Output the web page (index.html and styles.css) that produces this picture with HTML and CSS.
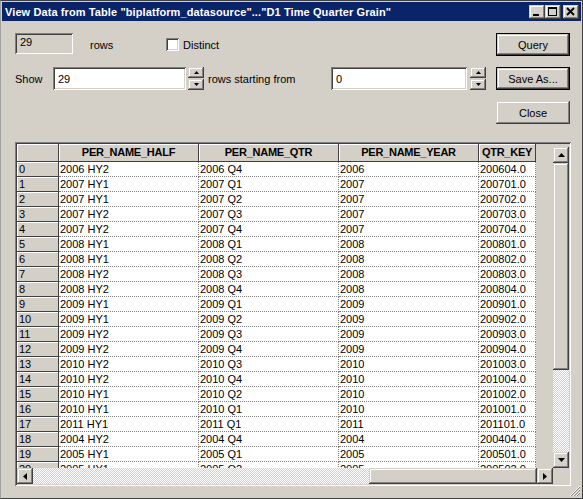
FILE: index.html
```html
<!DOCTYPE html>
<html>
<head>
<meta charset="utf-8">
<link rel="stylesheet" href="styles.css">
</head>
<body>
<div class="window">
  <div class="titlebar">
    <span class="title">View Data from Table "biplatform_datasource"..."D1 Time Quarter Grain"</span>
    <div class="tbtns">
      <span class="tbtn raised"><svg width="16" height="14" viewBox="0 0 16 14"><rect x="4" y="9" width="6" height="2" fill="#000"/></svg></span>
      <span class="tbtn raised"><svg width="16" height="14" viewBox="0 0 16 14" shape-rendering="crispEdges"><rect x="3.5" y="2.5" width="8" height="8" fill="none" stroke="#000"/><rect x="3" y="2" width="9" height="2" fill="#000"/></svg></span>
      <span class="tbtn raised close"><svg width="16" height="14" viewBox="0 0 16 14"><path d="M4 3 L11 10 M11 3 L4 10" stroke="#000" stroke-width="1.8" fill="none"/></svg></span>
    </div>
  </div>
  <div class="body">
    <div class="top">
      <div class="controls">
        <div class="row1">
          <div class="field ro sunken">29</div>
          <span class="lbl rows-lbl">rows</span>
          <span class="check sunken"></span>
          <span class="lbl">Distinct</span>
        </div>
        <div class="row2">
          <span class="lbl show">Show</span>
          <div class="field f1 sunken">29</div>
          <div class="spin s1">
            <span class="sbtn raised"><svg width="5" height="3" viewBox="0 0 5 3"><polygon points="0,3 5,3 2.5,0" fill="#000"/></svg></span>
            <span class="sbtn raised"><svg width="5" height="3" viewBox="0 0 5 3"><polygon points="0,0 5,0 2.5,3" fill="#000"/></svg></span>
          </div>
          <span class="lbl rsf">rows starting from</span>
          <div class="field f2 sunken">0</div>
          <div class="spin s2">
            <span class="sbtn raised"><svg width="5" height="3" viewBox="0 0 5 3"><polygon points="0,3 5,3 2.5,0" fill="#000"/></svg></span>
            <span class="sbtn raised"><svg width="5" height="3" viewBox="0 0 5 3"><polygon points="0,0 5,0 2.5,3" fill="#000"/></svg></span>
          </div>
        </div>
      </div>
      <div class="buttons">
        <div class="btn default"><span class="raised inner">Query</span></div>
        <div class="btn default"><span class="raised inner">Save As...</span></div>
        <div class="btn"><span class="raised inner">Close</span></div>
      </div>
    </div>

    <div class="frame">
      <div class="viewport">
        <div class="trow head">
          <span class="hc"></span><span class="hc">PER_NAME_HALF</span><span class="hc">PER_NAME_QTR</span><span class="hc">PER_NAME_YEAR</span><span class="hc">QTR_KEY</span>
        </div>
        <div class="trow"><span class="ix">0</span><span class="dc">2006 HY2</span><span class="dc">2006 Q4</span><span class="dc">2006</span><span class="dc">200604.0</span></div>
        <div class="trow"><span class="ix">1</span><span class="dc">2007 HY1</span><span class="dc">2007 Q1</span><span class="dc">2007</span><span class="dc">200701.0</span></div>
        <div class="trow"><span class="ix">2</span><span class="dc">2007 HY1</span><span class="dc">2007 Q2</span><span class="dc">2007</span><span class="dc">200702.0</span></div>
        <div class="trow"><span class="ix">3</span><span class="dc">2007 HY2</span><span class="dc">2007 Q3</span><span class="dc">2007</span><span class="dc">200703.0</span></div>
        <div class="trow"><span class="ix">4</span><span class="dc">2007 HY2</span><span class="dc">2007 Q4</span><span class="dc">2007</span><span class="dc">200704.0</span></div>
        <div class="trow"><span class="ix">5</span><span class="dc">2008 HY1</span><span class="dc">2008 Q1</span><span class="dc">2008</span><span class="dc">200801.0</span></div>
        <div class="trow"><span class="ix">6</span><span class="dc">2008 HY1</span><span class="dc">2008 Q2</span><span class="dc">2008</span><span class="dc">200802.0</span></div>
        <div class="trow"><span class="ix">7</span><span class="dc">2008 HY2</span><span class="dc">2008 Q3</span><span class="dc">2008</span><span class="dc">200803.0</span></div>
        <div class="trow"><span class="ix">8</span><span class="dc">2008 HY2</span><span class="dc">2008 Q4</span><span class="dc">2008</span><span class="dc">200804.0</span></div>
        <div class="trow"><span class="ix">9</span><span class="dc">2009 HY1</span><span class="dc">2009 Q1</span><span class="dc">2009</span><span class="dc">200901.0</span></div>
        <div class="trow"><span class="ix">10</span><span class="dc">2009 HY1</span><span class="dc">2009 Q2</span><span class="dc">2009</span><span class="dc">200902.0</span></div>
        <div class="trow"><span class="ix">11</span><span class="dc">2009 HY2</span><span class="dc">2009 Q3</span><span class="dc">2009</span><span class="dc">200903.0</span></div>
        <div class="trow"><span class="ix">12</span><span class="dc">2009 HY2</span><span class="dc">2009 Q4</span><span class="dc">2009</span><span class="dc">200904.0</span></div>
        <div class="trow"><span class="ix">13</span><span class="dc">2010 HY2</span><span class="dc">2010 Q3</span><span class="dc">2010</span><span class="dc">201003.0</span></div>
        <div class="trow"><span class="ix">14</span><span class="dc">2010 HY2</span><span class="dc">2010 Q4</span><span class="dc">2010</span><span class="dc">201004.0</span></div>
        <div class="trow"><span class="ix">15</span><span class="dc">2010 HY1</span><span class="dc">2010 Q2</span><span class="dc">2010</span><span class="dc">201002.0</span></div>
        <div class="trow"><span class="ix">16</span><span class="dc">2010 HY1</span><span class="dc">2010 Q1</span><span class="dc">2010</span><span class="dc">201001.0</span></div>
        <div class="trow"><span class="ix">17</span><span class="dc">2011 HY1</span><span class="dc">2011 Q1</span><span class="dc">2011</span><span class="dc">201101.0</span></div>
        <div class="trow"><span class="ix">18</span><span class="dc">2004 HY2</span><span class="dc">2004 Q4</span><span class="dc">2004</span><span class="dc">200404.0</span></div>
        <div class="trow"><span class="ix">19</span><span class="dc">2005 HY1</span><span class="dc">2005 Q1</span><span class="dc">2005</span><span class="dc">200501.0</span></div>
        <div class="trow"><span class="ix">20</span><span class="dc">2005 HY1</span><span class="dc">2005 Q2</span><span class="dc">2005</span><span class="dc">200502.0</span></div>
      </div>
      <div class="vscroll">
        <span class="sb raised"><svg width="7" height="4" viewBox="0 0 7 4"><polygon points="0,4 7,4 3.5,0" fill="#000"/></svg></span>
        <span class="vthumb raised"></span>
        <span class="vtrack dither"></span>
        <span class="sb raised"><svg width="7" height="4" viewBox="0 0 7 4"><polygon points="0,0 7,0 3.5,4" fill="#000"/></svg></span>
      </div>
      <div class="hscroll">
        <span class="sb raised"><svg width="4" height="7" viewBox="0 0 4 7"><polygon points="4,0 4,7 0,3.5" fill="#000"/></svg></span>
        <span class="htrack dither"></span>
        <span class="hthumb raised"></span>
        <span class="sb raised"><svg width="4" height="7" viewBox="0 0 4 7"><polygon points="0,0 0,7 4,3.5" fill="#000"/></svg></span>
      </div>
      <div class="corner"></div>
    </div>
  </div>
  <svg class="grip" width="12" height="12" viewBox="0 0 12 12">
    <path d="M11 1 L1 11 M11 4 L4 11 M11 7 L7 11" stroke="#fff" stroke-width="1" fill="none"/>
    <path d="M11 2 L2 11 M11 5 L5 11 M11 8 L8 11" stroke="#808080" stroke-width="1" fill="none"/>
  </svg>
</div>
</body>
</html>
```

FILE: styles.css
```css
html, body {
  margin: 0;
  padding: 0;
  background: #d4d0c8;
}
body {
  font-family: "Liberation Sans", Arial, sans-serif;
  font-size: 11px;
  color: #000;
}
.window {
  position: relative;
  width: 583px;
  height: 499px;
  box-sizing: border-box;
  border: 1px solid #404040;
  border-left-color: #a0a0a0;
  padding: 1px 1px 1px 1px;
  background: #d4d0c8;
}
.raised {
  background: #d4d0c8;
  box-shadow: inset -1px -1px #404040, inset 1px 1px #d4d0c8, inset -2px -2px #808080, inset 2px 2px #fff;
}
.sunken {
  box-shadow: inset 1px 1px #808080, inset -1px -1px #fff, inset 2px 2px #404040, inset -2px -2px #d4d0c8;
}
.dither {
  background: repeating-conic-gradient(#fff 0 25%, #d4d0c8 0 50%) 0 0 / 2px 2px;
}
.titlebar {
  height: 19px;
  background: #0a246a;
  display: flex;
  align-items: center;
  padding-left: 3px;
  color: #fff;
}
.title {
  font-weight: bold;
  font-size: 11px;
  letter-spacing: 0.1px;
  white-space: nowrap;
}
.tbtns {
  margin-left: auto;
  display: flex;
  padding-right: 2px;
}
.tbtn {
  width: 16px;
  height: 14px;
  display: block;
}
.tbtn svg { display: block; }
.tbtn.close { margin-left: 2px; }

.top {
  display: flex;
  padding: 12px 0 0 13px;
}
.controls {
  width: 481px;
}
.row1, .row2 {
  display: flex;
  align-items: center;
  height: 23px;
}
.row2 { margin-top: 11px; }
.field {
  box-sizing: border-box;
  background: #fff;
  padding: 0 3px 0 5px;
  display: flex;
  align-items: center;
}
.field.ro {
  width: 58px;
  height: 21px;
  background: #d4d0c8;
  align-items: flex-start;
  padding-top: 3px;
  align-self: flex-start;
}
.rows-lbl {
  margin-left: 17px;
  width: 76px;
}
.check {
  width: 13px;
  height: 13px;
  background: #fff;
  margin-right: 4px;
}
.show { width: 38px; }
.f1 { width: 133px; height: 23px; }
.f2 { width: 136px; height: 23px; }
.spin {
  display: flex;
  flex-direction: column;
  gap: 1px;
  width: 16px;
  height: 23px;
}
.s1 { margin-left: 2px; }
.s2 { margin-left: 3px; }
.sbtn {
  height: 11px;
  display: flex;
  align-items: center;
  justify-content: center;
}
.sbtn svg { display: block; }
.rsf {
  margin-left: 4px;
  width: 123px;
}
.buttons {
  display: flex;
  flex-direction: column;
  gap: 11px;
  width: 74px;
}
.btn {
  height: 23px;
  box-sizing: border-box;
  display: flex;
}
.btn .inner {
  flex: 1;
  display: flex;
  align-items: center;
  justify-content: center;
}
.btn.default {
  border: 1px solid #000;
}

.frame {
  margin: 18px 0 0 13px;
  width: 556px;
  height: 344px;
  box-sizing: border-box;
  padding: 2px;
  box-shadow: inset 1px 1px #808080, inset -1px -1px #fff, inset 2px 2px #404040, inset -2px -2px #d4d0c8;
  display: grid;
  grid-template-columns: 536px 16px;
  grid-template-rows: 324px 16px;
}
.viewport {
  overflow: hidden;
  background: #d4d0c8;
}
.trow {
  display: grid;
  grid-template-columns: 42px 140px 140px 140px 57px;
  height: 15px;
}
.trow.head {
  height: 18px;
}
.trow > span {
  box-sizing: border-box;
  white-space: nowrap;
  overflow: hidden;
  line-height: 14px;
}
.hc {
  background: #d4d0c8;
  border-right: 1px solid #404040;
  border-bottom: 1px solid #404040;
  box-shadow: inset 1px 1px #fff;
  font-weight: bold;
  letter-spacing: -0.25px;
  text-align: center;
  line-height: 17px !important;
}
.ix {
  background: #d4d0c8;
  border-right: 1px solid #404040;
  border-bottom: 1px solid #404040;
  box-shadow: inset 1px 1px #fff;
  padding-left: 2px;
}
.dc {
  background: #fff;
  border-right: 1px dotted #808080;
  border-bottom: 1px dotted #808080;
  padding-left: 1px;
}
.vscroll {
  display: flex;
  flex-direction: column;
  padding-top: 3px;
  background: #d4d0c8;
}
.sb {
  width: 16px;
  height: 16px;
  flex: none;
  display: flex;
  align-items: center;
  justify-content: center;
}
.sb svg { display: block; }
.vthumb { height: 207px; flex: none; }
.vtrack { flex: 1; }
.hscroll {
  display: flex;
}
.htrack { width: 336px; }
.hthumb { width: 168px; }
.corner { background: #d4d0c8; }
.grip {
  position: absolute;
  right: 1px;
  bottom: 1px;
}
```
